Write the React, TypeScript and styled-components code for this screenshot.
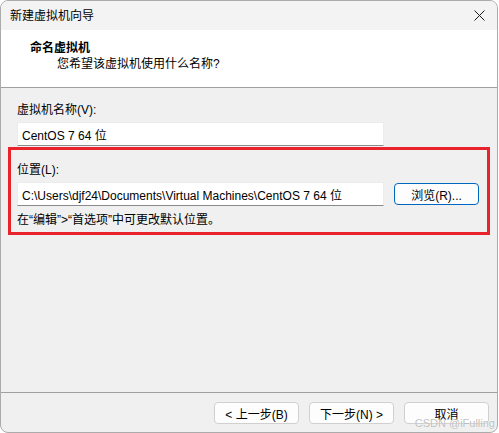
import styled, { createGlobalStyle } from "styled-components";

const GlobalStyle = createGlobalStyle`
  body {
    margin: 0;
    background: #ffffff;
    font-family: "Liberation Sans", "Noto Sans CJK SC", sans-serif;
    font-size: 12px;
    color: #000;
  }
`;

const Window = styled.div`
  position: relative;
  box-sizing: border-box;
  width: 498px;
  height: 433px;
  display: flex;
  flex-direction: column;
  border: 1px solid #ababab;
  border-radius: 8px;
  overflow: hidden;
  background: #f0f0f0;
`;

const TitleBar = styled.div`
  height: 29px;
  display: flex;
  align-items: center;
  justify-content: space-between;
  padding: 0 9px 0 9px;
  background: #f3f3f3;
`;

const Title = styled.span`
  font-size: 12px;
  line-height: 16px;
`;

const CloseIcon = styled.svg`
  width: 11px;
  height: 11px;
  margin-right: 3px;
`;

const Header = styled.div`
  height: 57px;
  box-sizing: content-box;
  background: #ffffff;
  border-bottom: 1px solid #a0a0a0;
  display: flex;
  flex-direction: column;
`;

const HeaderTitle = styled.div`
  font-weight: bold;
  line-height: 16px;
  margin: 10px 0 0 29px;
`;

const HeaderSub = styled.div`
  line-height: 16px;
  margin-left: 56px;
`;

const Body = styled.div`
  flex: 1;
  padding: 14px 7px 0 7px;
  display: flex;
  flex-direction: column;
`;

const Section = styled.div`
  padding: 0 9px;
  display: flex;
  flex-direction: column;
`;

const Highlight = styled.div`
  margin-top: 1px;
  border: 3px solid #e8232b;
  padding: 12px 8px 4px 6px;
  display: flex;
  flex-direction: column;
`;

const Label = styled.div`
  line-height: 16px;
  margin-bottom: 4px;
`;

const Row = styled.div`
  display: flex;
  align-items: center;
  gap: 10px;
`;

const TextBox = styled.div`
  box-sizing: border-box;
  width: 367px;
  height: 24px;
  display: flex;
  align-items: center;
  padding-left: 4px;
  background: #ffffff;
  border: 1px solid #ececec;
  border-bottom-color: #8a8a8a;
  white-space: nowrap;
  overflow: hidden;
`;

const Hint = styled.div`
  line-height: 16px;
  margin-top: 6px;
`;

const Button = styled.button<{ $primary?: boolean }>`
  box-sizing: border-box;
  width: 85px;
  height: 22px;
  padding: 0;
  font-family: inherit;
  font-size: 12px;
  color: #000;
  background: #fdfdfd;
  border: 1px solid ${(p) => (p.$primary ? "#0067c0" : "#d0d0d0")};
  border-radius: 4px;
`;

const Footer = styled.div`
  box-sizing: border-box;
  height: 40px;
  border-top: 1px solid #a0a0a0;
  padding: 9px 8px 0 0;
  display: flex;
  justify-content: flex-end;
  gap: 10px;
`;

const Watermark = styled.div`
  position: absolute;
  right: 2px;
  bottom: 3px;
  font-size: 11px;
  color: rgba(140, 140, 140, 0.55);
  text-shadow: 0 0 1px #fff;
  pointer-events: none;
`;

export default function App() {
  return (
    <>
      <GlobalStyle />
      <Window>
        <TitleBar>
          <Title>新建虚拟机向导</Title>
          <CloseIcon viewBox="0 0 11 11">
            <path d="M0.5 0.5 L10.5 10.5 M10.5 0.5 L0.5 10.5" stroke="#1a1a1a" strokeWidth="1" />
          </CloseIcon>
        </TitleBar>
        <Header>
          <HeaderTitle>命名虚拟机</HeaderTitle>
          <HeaderSub>您希望该虚拟机使用什么名称?</HeaderSub>
        </Header>
        <Body>
          <Section>
            <Label>虚拟机名称(V):</Label>
            <TextBox>CentOS 7 64 位</TextBox>
          </Section>
          <Highlight>
            <Label>位置(L):</Label>
            <Row>
              <TextBox>C:\Users\djf24\Documents\Virtual Machines\CentOS 7 64 位</TextBox>
              <Button $primary>浏览(R)...</Button>
            </Row>
            <Hint>在“编辑”&gt;“首选项”中可更改默认位置。</Hint>
          </Highlight>
        </Body>
        <Footer>
          <Button>&lt; 上一步(B)</Button>
          <Button>下一步(N) &gt;</Button>
          <Button>取消</Button>
        </Footer>
        <Watermark>CSDN @iFulling</Watermark>
      </Window>
    </>
  );
}
